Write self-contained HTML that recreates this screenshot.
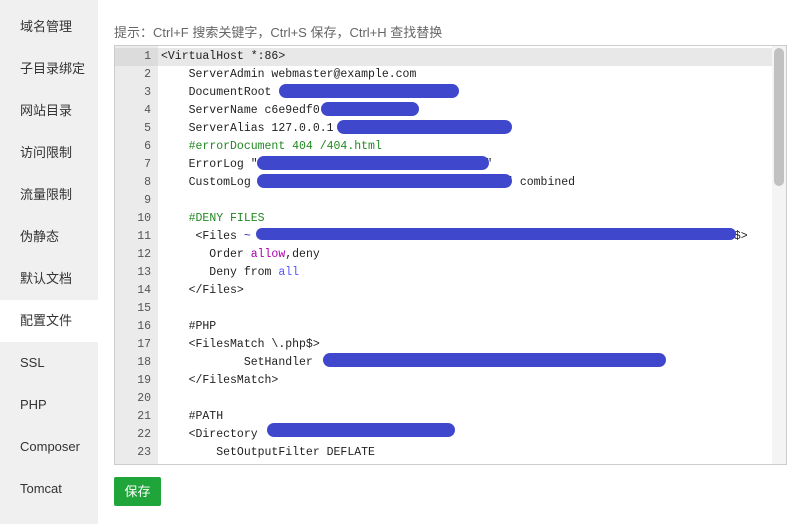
<!DOCTYPE html><html><head><meta charset="utf-8"><style>
body{margin:0;width:807px;height:524px;background:#fff;position:relative;overflow:hidden;font-family:"Liberation Sans","Noto Sans CJK SC",sans-serif}
.side{position:absolute;left:0;top:0;width:98px;height:524px;background:#f0f0f0}
.it{position:absolute;left:0;width:98px;height:42px;line-height:42px;padding-left:20px;box-sizing:border-box;font-size:13px;color:#333}
.it.a{background:#fff}
.tip{position:absolute;left:114px;top:22px;font-size:13px;color:#666}
.ed{position:absolute;left:114px;top:45px;width:673px;height:420px;border:1px solid #ccc;box-sizing:border-box;overflow:hidden;background:#fff}
.gut{position:absolute;left:0;top:0;width:43px;height:100%;background:#ebebeb}
.hl{position:absolute;left:0;top:2px;width:660px;height:18px;background:#e8e8e8}
.ln{position:absolute;left:0;width:36px;text-align:right;font:11.5px/18px "Liberation Mono",monospace;color:#555}
.cd{position:absolute;left:46px;font:11.5px/18px "Liberation Mono",monospace;color:#222;white-space:pre}
.b{position:absolute;background:#3f48cc;border-radius:8px;height:14px}
.tr{position:absolute;right:0;top:0;width:14px;height:100%;background:#f4f4f4}
.sb{position:absolute;right:2px;top:2px;width:10px;height:138px;background:#c1c1c1;border-radius:5px}
.btn{position:absolute;left:114px;top:477px;width:47px;height:29px;background:#20a53a;color:#fff;font-size:13px;text-align:center;line-height:29px;border-radius:2px}
</style></head><body>
<div class="side">
<div class="it" style="top:6px">域名管理</div>
<div class="it" style="top:48px">子目录绑定</div>
<div class="it" style="top:90px">网站目录</div>
<div class="it" style="top:132px">访问限制</div>
<div class="it" style="top:174px">流量限制</div>
<div class="it" style="top:216px">伪静态</div>
<div class="it" style="top:258px">默认文档</div>
<div class="it a" style="top:300px">配置文件</div>
<div class="it" style="top:342px">SSL</div>
<div class="it" style="top:384px">PHP</div>
<div class="it" style="top:426px">Composer</div>
<div class="it" style="top:468px">Tomcat</div>
</div>
<div class="tip">提示：Ctrl+F 搜索关键字，Ctrl+S 保存，Ctrl+H 查找替换</div>
<div class="ed">
<div class="hl"></div>
<div class="gut"></div>
<div class="hl" style="width:43px;background:#dcdcdc"></div>
<div class="ln" style="top:2px">1<br>2<br>3<br>4<br>5<br>6<br>7<br>8<br>9<br>10<br>11<br>12<br>13<br>14<br>15<br>16<br>17<br>18<br>19<br>20<br>21<br>22<br>23<br>24</div>
<div class="cd" style="top:2px">&lt;VirtualHost *:86&gt;
    ServerAdmin webmaster@example.com
    DocumentRoot
    ServerName c6e9edf0
    ServerAlias 127.0.0.1
    <span style="color:#228822">#errorDocument 404 /404.html</span>
    ErrorLog "                                g"
    CustomLog                                     " combined

    <span style="color:#228822">#DENY FILES</span>
     &lt;Files <span style="color:#33c">~</span>                                                                      $&gt;
       Order <span style="color:#a0a">allow</span>,deny
       Deny from <span style="color:#55f">all</span>
    &lt;/Files&gt;

    #PHP
    &lt;FilesMatch \.php$&gt;
            SetHandler
    &lt;/FilesMatch&gt;

    #PATH
    &lt;Directory
        SetOutputFilter DEFLATE
        Options FollowSymLinks</div>
<div class="b" style="left:164px;top:38px;width:180px"></div>
<div class="b" style="left:206px;top:56px;width:98px"></div>
<div class="b" style="left:222px;top:74px;width:175px"></div>
<div class="b" style="left:142px;top:110px;width:232px"></div>
<div class="b" style="left:142px;top:128px;width:255px"></div>
<div class="b" style="left:141px;top:182px;width:480px;height:12px"></div>
<div class="b" style="left:208px;top:307px;width:343px"></div>
<div class="b" style="left:152px;top:377px;width:188px"></div>
<div class="tr"></div>
<div class="sb"></div>
</div>
<div class="btn">保存</div>
</body></html>
